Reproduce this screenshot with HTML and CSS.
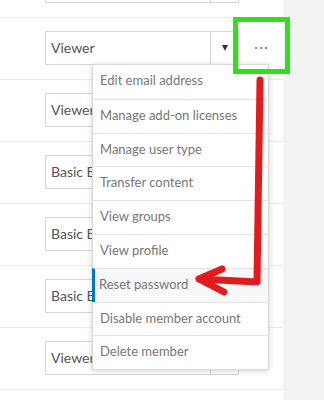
FILE: index.html
```html
<!DOCTYPE html>
<html lang="en">
<head>
	<meta charset="UTF-8">
	<title>Members</title>
	<link rel="stylesheet" href="styles.css">
</head>
<body>
	<div class="page">
		<div class="members">
			<div class="row">
				<div class="role"><span class="role-text"></span><span class="role-arrow"></span></div>
				<button class="more" type="button"></button>
			</div>
			<div class="row">
				<div class="role"><span class="role-text">Viewer</span><span class="role-arrow"></span></div>
				<button class="more more-active" type="button"><span></span><span></span><span></span></button>
			</div>
			<div class="row">
				<div class="role"><span class="role-text">Viewer</span><span class="role-arrow"></span></div>
				<button class="more" type="button"></button>
			</div>
			<div class="row">
				<div class="role"><span class="role-text">Basic E</span><span class="role-arrow"></span></div>
				<button class="more" type="button"></button>
			</div>
			<div class="row">
				<div class="role"><span class="role-text">Basic E</span><span class="role-arrow"></span></div>
				<button class="more" type="button"></button>
			</div>
			<div class="row">
				<div class="role"><span class="role-text">Basic E</span><span class="role-arrow"></span></div>
				<button class="more" type="button"></button>
			</div>
			<div class="row">
				<div class="role"><span class="role-text">Viewer</span><span class="role-arrow"></span></div>
				<button class="more" type="button"></button>
			</div>
		</div>
		<div class="side"></div>

		<ul class="menu">
			<li>Edit email address</li>
			<li>Manage add-on licenses</li>
			<li>Manage user type</li>
			<li>Transfer content</li>
			<li>View groups</li>
			<li>View profile</li>
			<li class="active">Reset password</li>
			<li>Disable member account</li>
			<li>Delete member</li>
		</ul>

		<!-- annotation drawn on top of the screenshot -->
		<svg class="marks" width="324" height="400" viewBox="0 0 324 400">
			<rect x="235.5" y="19.5" width="52" height="52" fill="none" stroke="#2fe01a" stroke-width="5"/>
			<path d="M260 80 L257 282 L200 279" fill="none" stroke="#e21c1c" stroke-width="7" stroke-linecap="round" stroke-linejoin="round"/>
			<path d="M222 269 L199 279 L224 292" fill="none" stroke="#e21c1c" stroke-width="7" stroke-linecap="round" stroke-linejoin="round"/>
		</svg>
	</div>
</body>
</html>
```
FILE: styles.css
```css
*{padding: 0; margin: 0; box-sizing: border-box;}
body{font-family: Lato, "Open Sans", sans-serif; background: #fff; overflow: hidden;}
.page{position: relative; width: 324px; height: 400px; display: flex; overflow: hidden;}
.members{width: 283px; margin-top: -44px;}
.side{flex: 1; background: #f3f3f3;}

.row{height: 62px; border-bottom: 1px solid #ececec; padding-top: 13px; display: flex;}
.role{margin-left: 45px; width: 195px; height: 34px; border: 1px solid #d6d6d6; display: flex; background: #fff;}
.role-text{flex: 1; padding-left: 5px; line-height: 32px; font-size: 14px; color: #555; white-space: nowrap; overflow: hidden;}
.role-arrow{width: 28px; border-left: 1px solid #d6d6d6; display: flex; align-items: center; justify-content: center;}
.role-arrow::after{content: ""; border-left: 3.5px solid transparent; border-right: 3.5px solid transparent; border-top: 6px solid #333;}
.more{width: 44px; height: 34px; border: none; background: #fff; display: flex; align-items: center; justify-content: center; gap: 3px;}
.more span{width: 2px; height: 2px; border-radius: 50%; background: #666;}

.menu{position: absolute; left: 92px; top: 64px; width: 177px; list-style: none; background: #fff; border: 1px solid #d9d9d9; box-shadow: 0 1px 6px rgba(0,0,0,.18);}
.menu li{height: 33.8px; line-height: 31px; padding-left: 7px; font-size: 13px; color: #777; border-top: 1px solid #e3e3e3; white-space: nowrap;}
.menu li:first-child{border-top: none;}
.menu li.active{background: #f8f8f8; border-left: 3px solid #0079c1; padding-left: 4px; margin-left: -1px;}

.marks{position: absolute; left: 0; top: 0; pointer-events: none;}
```
